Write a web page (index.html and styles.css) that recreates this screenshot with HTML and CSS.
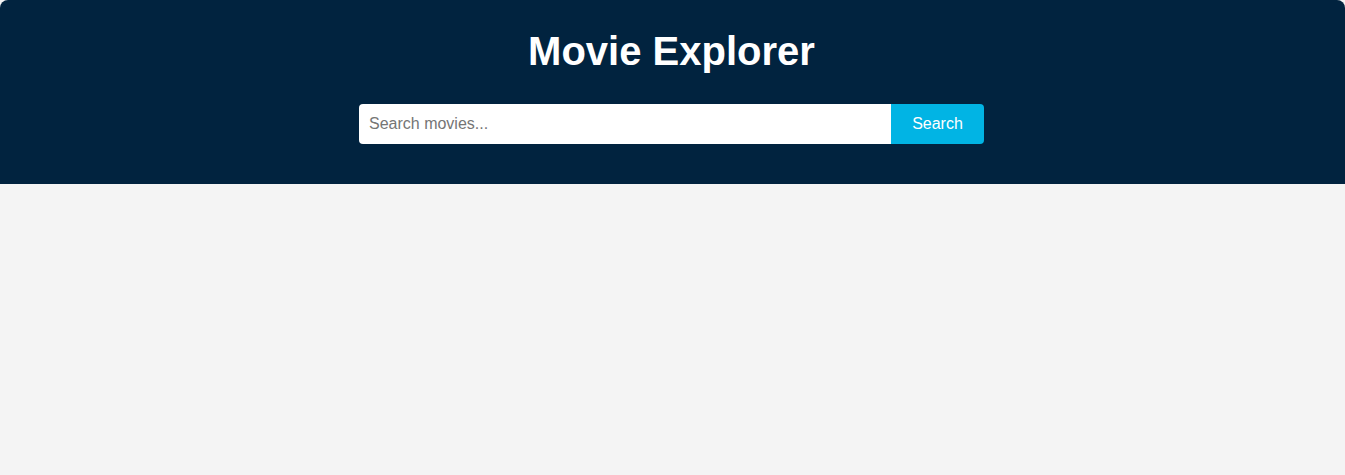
FILE: index.html
```html
<!DOCTYPE html>
<html lang="en">
<head>
<meta charset="utf-8">
<title>Movie Explorer</title>
<link rel="stylesheet" href="styles.css">
</head>
<body>
<header class="header">
  <h1 class="title">Movie Explorer</h1>
  <form class="search" onsubmit="return false">
    <input class="search-input" type="text" placeholder="Search movies...">
    <button class="search-btn" type="submit">Search</button>
  </form>
</header>
<main class="content"></main>
</body>
</html>
```

FILE: styles.css
```css
html, body {
  margin: 0;
  padding: 0;
  background: #f4f4f4;
  font-family: "Liberation Sans", Arial, sans-serif;
  height: 100%;
}
.header {
  background: #01233f;
  border-radius: 8px 8px 0 0;
  padding: 28px 0 40px;
  display: flex;
  flex-direction: column;
  align-items: center;
}
.title {
  margin: 0 0 30px -2px;
  color: #ffffff;
  font-size: 40px;
  font-weight: 700;
  line-height: 46px;
}
.search {
  display: flex;
  width: 625px;
  height: 40px;
  margin-left: -2px;
}
.search-input {
  flex: 1;
  border: none;
  border-radius: 4px 0 0 4px;
  padding: 0 10px;
  font-size: 16px;
  font-family: "Liberation Sans", Arial, sans-serif;
  color: #333;
  background: #ffffff;
  outline: none;
}
.search-input::placeholder {
  color: #757575;
}
.search-btn {
  width: 93px;
  border: none;
  border-radius: 0 4px 4px 0;
  background: #01b4e4;
  color: #ffffff;
  font-size: 16px;
  font-family: "Liberation Sans", Arial, sans-serif;
  cursor: pointer;
}
```
